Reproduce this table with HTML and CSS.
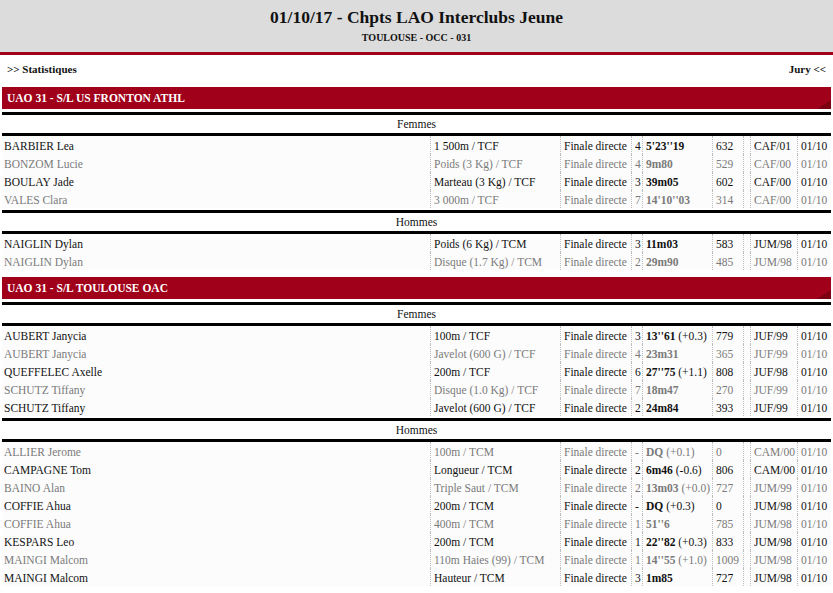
FILE: index.html
```html
<!DOCTYPE html>
<html lang="fr">
<head>
<meta charset="utf-8">
<title>01/10/17 - Chpts LAO Interclubs Jeune</title>
<link rel="stylesheet" href="styles.css">
</head>
<body>
<header class="top">
  <h1 class="title">01/10/17 - Chpts LAO Interclubs Jeune</h1>
  <div class="subtitle">TOULOUSE - OCC - 031</div>
</header>
<nav class="links">
  <a class="link">&gt;&gt; Statistiques</a>
  <a class="link">Jury &lt;&lt;</a>
</nav>

<section class="club">
  <div class="club-bar">UAO 31 - S/L US FRONTON ATHL</div>
  <table class="group">
    <colgroup><col class="c-name"><col class="c-ev"><col class="c-rd"><col class="c-pl"><col class="c-pf"><col class="c-pt"><col class="c-x"><col class="c-cat"><col class="c-dt"></colgroup>
    <thead><tr><th colspan="9">Femmes</th></tr></thead>
    <tbody>
      <tr class="on"><td>BARBIER Lea</td><td>1 500m / TCF</td><td>Finale directe</td><td>4</td><td><b>5'23''19</b></td><td>632</td><td></td><td>CAF/01</td><td>01/10</td></tr>
      <tr class="off"><td>BONZOM Lucie</td><td>Poids (3 Kg) / TCF</td><td>Finale directe</td><td>4</td><td><b>9m80</b></td><td>529</td><td></td><td>CAF/00</td><td>01/10</td></tr>
      <tr class="on"><td>BOULAY Jade</td><td>Marteau (3 Kg) / TCF</td><td>Finale directe</td><td>3</td><td><b>39m05</b></td><td>602</td><td></td><td>CAF/00</td><td>01/10</td></tr>
      <tr class="off"><td>VALES Clara</td><td>3 000m / TCF</td><td>Finale directe</td><td>7</td><td><b>14'10''03</b></td><td>314</td><td></td><td>CAF/00</td><td>01/10</td></tr>
    </tbody>
  </table>
  <table class="group">
    <colgroup><col class="c-name"><col class="c-ev"><col class="c-rd"><col class="c-pl"><col class="c-pf"><col class="c-pt"><col class="c-x"><col class="c-cat"><col class="c-dt"></colgroup>
    <thead><tr><th colspan="9">Hommes</th></tr></thead>
    <tbody>
      <tr class="on"><td>NAIGLIN Dylan</td><td>Poids (6 Kg) / TCM</td><td>Finale directe</td><td>3</td><td><b>11m03</b></td><td>583</td><td></td><td>JUM/98</td><td>01/10</td></tr>
      <tr class="off"><td>NAIGLIN Dylan</td><td>Disque (1.7 Kg) / TCM</td><td>Finale directe</td><td>2</td><td><b>29m90</b></td><td>485</td><td></td><td>JUM/98</td><td>01/10</td></tr>
    </tbody>
  </table>
</section>

<section class="club">
  <div class="club-bar">UAO 31 - S/L TOULOUSE OAC</div>
  <table class="group">
    <colgroup><col class="c-name"><col class="c-ev"><col class="c-rd"><col class="c-pl"><col class="c-pf"><col class="c-pt"><col class="c-x"><col class="c-cat"><col class="c-dt"></colgroup>
    <thead><tr><th colspan="9">Femmes</th></tr></thead>
    <tbody>
      <tr class="on"><td>AUBERT Janycia</td><td>100m / TCF</td><td>Finale directe</td><td>3</td><td><b>13''61</b> (+0.3)</td><td>779</td><td></td><td>JUF/99</td><td>01/10</td></tr>
      <tr class="off"><td>AUBERT Janycia</td><td>Javelot (600 G) / TCF</td><td>Finale directe</td><td>4</td><td><b>23m31</b></td><td>365</td><td></td><td>JUF/99</td><td>01/10</td></tr>
      <tr class="on"><td>QUEFFELEC Axelle</td><td>200m / TCF</td><td>Finale directe</td><td>6</td><td><b>27''75</b> (+1.1)</td><td>808</td><td></td><td>JUF/98</td><td>01/10</td></tr>
      <tr class="off"><td>SCHUTZ Tiffany</td><td>Disque (1.0 Kg) / TCF</td><td>Finale directe</td><td>7</td><td><b>18m47</b></td><td>270</td><td></td><td>JUF/99</td><td>01/10</td></tr>
      <tr class="on"><td>SCHUTZ Tiffany</td><td>Javelot (600 G) / TCF</td><td>Finale directe</td><td>2</td><td><b>24m84</b></td><td>393</td><td></td><td>JUF/99</td><td>01/10</td></tr>
    </tbody>
  </table>
  <table class="group">
    <colgroup><col class="c-name"><col class="c-ev"><col class="c-rd"><col class="c-pl"><col class="c-pf"><col class="c-pt"><col class="c-x"><col class="c-cat"><col class="c-dt"></colgroup>
    <thead><tr><th colspan="9">Hommes</th></tr></thead>
    <tbody>
      <tr class="off"><td>ALLIER Jerome</td><td>100m / TCM</td><td>Finale directe</td><td>-</td><td><b>DQ</b> (+0.1)</td><td>0</td><td></td><td>CAM/00</td><td>01/10</td></tr>
      <tr class="on"><td>CAMPAGNE Tom</td><td>Longueur / TCM</td><td>Finale directe</td><td>2</td><td><b>6m46</b> (-0.6)</td><td>806</td><td></td><td>CAM/00</td><td>01/10</td></tr>
      <tr class="off"><td>BAINO Alan</td><td>Triple Saut / TCM</td><td>Finale directe</td><td>2</td><td><b>13m03</b> (+0.0)</td><td>727</td><td></td><td>JUM/99</td><td>01/10</td></tr>
      <tr class="on"><td>COFFIE Ahua</td><td>200m / TCM</td><td>Finale directe</td><td>-</td><td><b>DQ</b> (+0.3)</td><td>0</td><td></td><td>JUM/98</td><td>01/10</td></tr>
      <tr class="off"><td>COFFIE Ahua</td><td>400m / TCM</td><td>Finale directe</td><td>1</td><td><b>51''6</b></td><td>785</td><td></td><td>JUM/98</td><td>01/10</td></tr>
      <tr class="on"><td>KESPARS Leo</td><td>200m / TCM</td><td>Finale directe</td><td>1</td><td><b>22''82</b> (+0.3)</td><td>833</td><td></td><td>JUM/98</td><td>01/10</td></tr>
      <tr class="off"><td>MAINGI Malcom</td><td>110m Haies (99) / TCM</td><td>Finale directe</td><td>1</td><td><b>14''55</b> (+1.0)</td><td>1009</td><td></td><td>JUM/98</td><td>01/10</td></tr>
      <tr class="on"><td>MAINGI Malcom</td><td>Hauteur / TCM</td><td>Finale directe</td><td>3</td><td><b>1m85</b></td><td>727</td><td></td><td>JUM/98</td><td>01/10</td></tr>
    </tbody>
  </table>
</section>
</body>
</html>
```

FILE: styles.css
```css
html, body {
  margin: 0;
  padding: 0;
  background: #ffffff;
}
body {
  font-family: "Liberation Serif", "Times New Roman", serif;
  font-size: 11.5px;
  color: #111;
}
.top {
  background: #dcdcdc;
  border-bottom: 3px solid #a00019;
  padding: 6px 0 7px;
  text-align: center;
}
.title {
  margin: 0;
  font-size: 17.5px;
  line-height: 22px;
  font-weight: bold;
  color: #111;
}
.subtitle {
  margin-top: 3px;
  font-size: 10px;
  line-height: 14px;
  font-weight: bold;
}
.links {
  display: flex;
  justify-content: space-between;
  padding: 7px 7px 11px 7px;
  line-height: 14px;
  font-size: 11px;
  font-weight: bold;
}
.link {
  color: #111;
  text-decoration: none;
}
.club {
  margin: 0 2px;
}
.club + .club {
  margin-top: 7px;
}
.club-bar {
  height: 22px;
  line-height: 22px;
  padding-left: 5px;
  color: #fff;
  font-weight: bold;
  font-size: 11.5px;
  background: linear-gradient(to bottom right, transparent 50%, #7c0012 50%) right bottom / 14px 9px no-repeat, #a00019;
}
.group {
  width: 829px;
  table-layout: fixed;
  border-collapse: separate;
  border-spacing: 0;
  margin-top: 2px;
  background: #fcfcfc;
}
.club-bar + .group {
  margin-top: 3px;
}
.group th {
  border-top: 3px solid #000;
  border-bottom: 3px solid #000;
  background: #fff;
  font-weight: normal;
  line-height: 18px;
  padding: 0;
  text-align: center;
  color: #111;
}
.group td {
  line-height: 16px;
  padding: 2px 0 0 3px;
  white-space: nowrap;
  overflow: hidden;
  border-left: 1px dotted #bdbdbd;
}
.group td:first-child {
  border-left: none;
  padding-left: 2px;
}
.on td { color: #111; }
.off td { color: #7a7a7a; }
.c-name { width: 428px; }
.c-ev { width: 130px; }
.c-rd { width: 71px; }
.c-pl { width: 11px; }
.c-pf { width: 70px; }
.c-pt { width: 31px; }
.c-x { width: 7px; }
.c-cat { width: 47px; }
.c-dt { width: 34px; }
```
